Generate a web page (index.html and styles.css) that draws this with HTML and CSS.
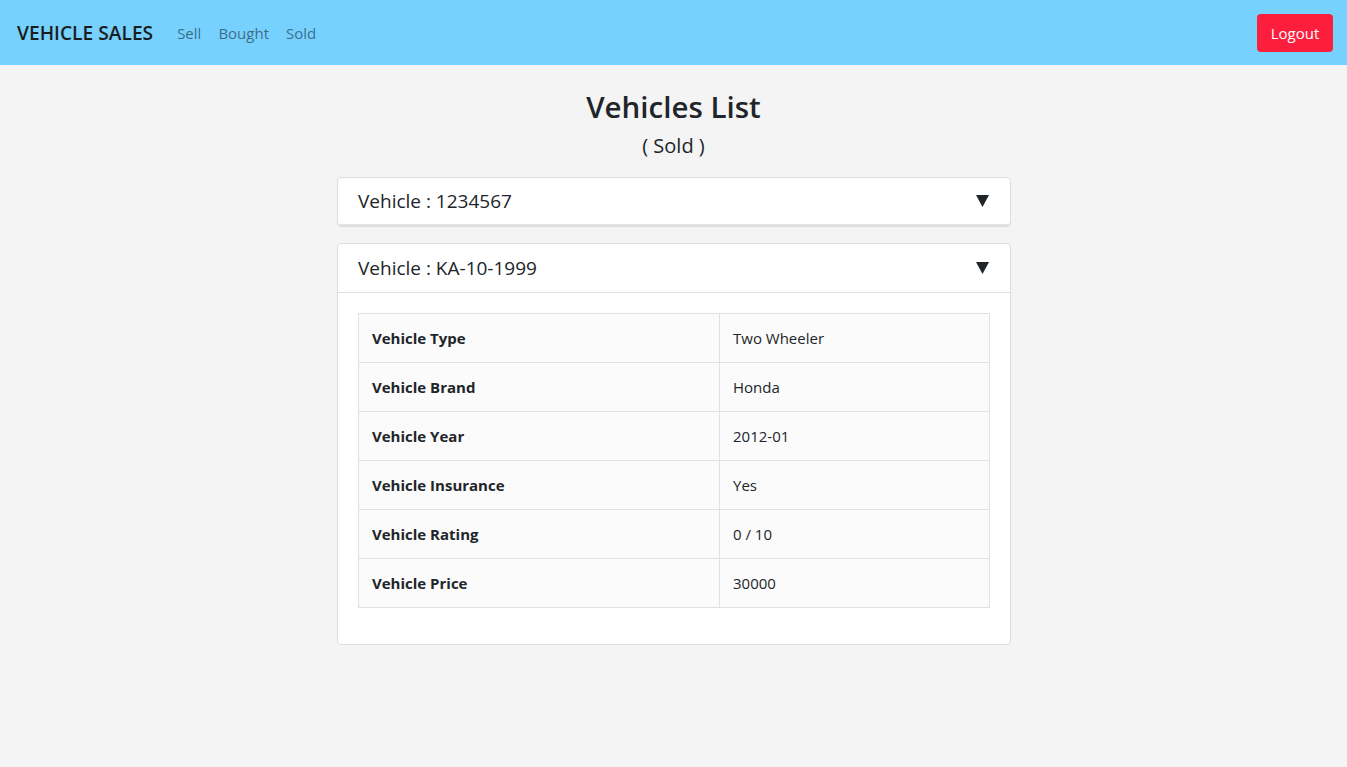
FILE: index.html
```html
<!DOCTYPE html>
<html lang="en">
<head>
<meta charset="utf-8">
<title>Vehicle Sales</title>
<link rel="stylesheet" href="styles.css">
</head>
<body>
<nav class="navbar">
  <div class="nav-left">
    <a class="brand" href="#">VEHICLE SALES</a>
    <ul class="nav-links">
      <li><a href="#">Sell</a></li>
      <li><a href="#">Bought</a></li>
      <li><a href="#">Sold</a></li>
    </ul>
  </div>
  <button class="btn-logout">Logout</button>
</nav>
<main class="main">
  <h2 class="title">Vehicles List</h2>
  <h5 class="subtitle">( Sold )</h5>
  <div class="list">
    <div class="card">
      <div class="card-header closed">
        <span class="card-title">Vehicle : 1234567</span>
        <svg class="caret" width="13" height="12" viewBox="0 0 13 12"><polygon points="0,0 13,0 6.5,12" fill="#212529"/></svg>
      </div>
    </div>
    <div class="card">
      <div class="card-header">
        <span class="card-title">Vehicle : KA-10-1999</span>
        <svg class="caret" width="13" height="12" viewBox="0 0 13 12"><polygon points="0,0 13,0 6.5,12" fill="#212529"/></svg>
      </div>
      <div class="card-body">
        <table class="details">
          <tbody>
            <tr><th>Vehicle Type</th><td>Two Wheeler</td></tr>
            <tr><th>Vehicle Brand</th><td>Honda</td></tr>
            <tr><th>Vehicle Year</th><td>2012-01</td></tr>
            <tr><th>Vehicle Insurance</th><td>Yes</td></tr>
            <tr><th>Vehicle Rating</th><td>0 / 10</td></tr>
            <tr><th>Vehicle Price</th><td>30000</td></tr>
          </tbody>
        </table>
      </div>
    </div>
  </div>
</main>
</body>
</html>
```
FILE: styles.css
```css
* { box-sizing: border-box; }
html, body { margin: 0; padding: 0; }
body {
  background: #f4f4f4;
  font-family: "Open Sans", "Noto Sans", sans-serif;
  color: #212529;
  font-size: 15px;
}
.navbar {
  height: 65px;
  background: #76d1ff;
  display: flex;
  align-items: center;
  justify-content: space-between;
  padding: 0 14px 0 17px;
}
.nav-left { display: flex; align-items: center; }
.brand {
  font-size: 19.2px;
  font-weight: 600;
  color: #1a1d20;
  text-decoration: none;
  margin-right: 24px;
}
.nav-links {
  list-style: none;
  margin: 0;
  padding: 0;
  display: flex;
  gap: 17px;
}
.nav-links a {
  color: rgba(0,0,0,0.5);
  text-decoration: none;
  font-size: 15px;
}
.btn-logout {
  background: #fd1d3c;
  color: #fff;
  border: none;
  border-radius: 4px;
  width: 76px;
  height: 38px;
  font-family: inherit;
  font-size: 15px;
  padding: 0;
}
.main {
  display: flex;
  flex-direction: column;
  align-items: center;
}
.title {
  margin: 22px 0 0;
  font-size: 29.5px;
  font-weight: 600;
  line-height: 40px;
}
.subtitle {
  margin: 4px 0 0;
  font-size: 20px;
  font-weight: 500;
  line-height: 30px;
}
.list {
  width: 674px;
  margin: 16px 0 0 1px;
  display: flex;
  flex-direction: column;
  gap: 16px;
}
.card {
  background: #fff;
  border: 1px solid #dcdcdc;
  border-radius: 4px;
}
.card-header {
  height: 49px;
  padding: 0 21px 0 20px;
  display: flex;
  align-items: center;
  justify-content: space-between;
  border-bottom: 1px solid #e0e0e0;
}
.card-header.closed {
  height: 48px;
  border-bottom: 2px solid #e2e2e2;
  border-radius: 4px;
}
.card-title {
  font-size: 19px;
  font-weight: 500;
}
.caret { display: block; }
.card-body {
  padding: 20px 20px 36px;
}
.details {
  width: 100%;
  border-collapse: collapse;
  background: #fbfbfb;
}
.details th, .details td {
  border: 1px solid #dee2e6;
  height: 49px;
  padding: 0 13px;
  text-align: left;
  font-size: 15px;
}
.details th {
  width: 361px;
  font-weight: 700;
}
.details td { font-weight: 400; }
```
